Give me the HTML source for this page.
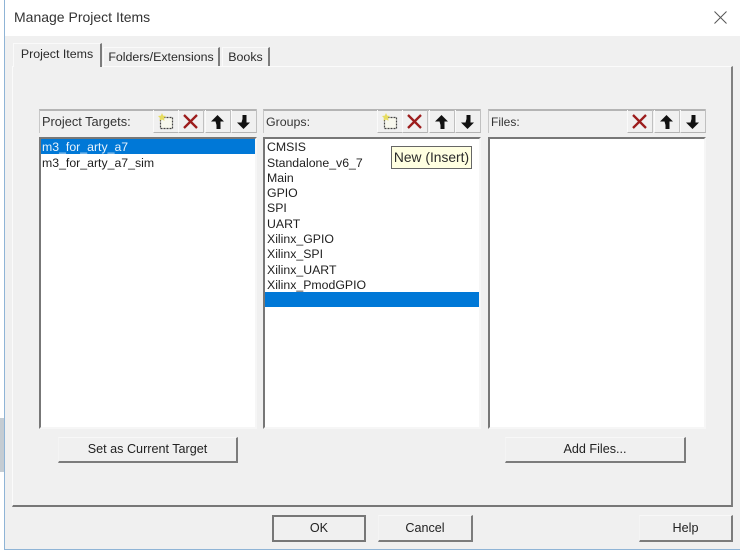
<!DOCTYPE html>
<html><head><meta charset="utf-8">
<style>
html,body{margin:0;padding:0;background:#fff}
#r{position:relative;width:740px;height:553px;overflow:hidden;background:#fff;font-family:"Liberation Sans",sans-serif;color:#222;font-size:12.3px;filter:blur(.35px)}
.a{position:absolute;box-sizing:border-box}
.t{position:absolute;white-space:nowrap;line-height:16px;color:#1e1e1e}
.h{font-size:12.8px;color:#333}
.hdr{position:absolute;box-sizing:border-box;height:24px;top:109px;width:218px;background:#f0f0f0;border-top:2px solid #b4b4b4;border-left:1px solid #c8c8c8;border-right:1px solid #e4e4e4}
.list{position:absolute;box-sizing:border-box;top:137px;height:292px;width:218px;background:#fff;border-top:2px solid #777;border-left:2px solid #777;border-right:2px solid #f6f6f6;border-bottom:2px solid #f6f6f6}
.sel{position:absolute;background:#0078d7}
.btn{position:absolute;box-sizing:border-box;height:26px;background:#f0f0f0;border-top:1px solid #f8f8f8;border-left:1px solid #f4f4f4;border-right:2px solid #7c7c7c;border-bottom:2px solid #7c7c7c;text-align:center;line-height:22px;color:#222;font-size:12.6px}
.tab{position:absolute;box-sizing:border-box;background:#f0f0f0;border-top:1px solid #fafafa;border-left:1px solid #fafafa;border-right:2px solid #7c7c7c;text-align:center;color:#2a2a2a;font-size:12.4px}
svg{position:absolute;overflow:visible}
.tb{position:absolute;box-sizing:border-box;top:110px;width:26px;height:23px;border-bottom:1px solid #b4b4b4;border-right:1px solid #c0c0c0;border-left:1px solid #fafafa}
</style></head><body>
<div id="r">
<!-- window -->
<div class="a" style="left:0;top:0;width:4px;height:553px;background:#fff"></div>
<div class="a" style="left:0;top:418px;width:4px;height:54px;background:#c4ccd3"></div>
<div class="a" style="left:4px;top:0;width:736px;height:550px;background:#f0f0f0;border-left:1px solid #8fb4d6;border-bottom:1px solid #8fb4d6"></div>
<div class="a" style="left:5px;top:0;width:735px;height:36px;background:#fff"></div>
<div class="a" style="left:0;top:550px;width:740px;height:3px;background:#fff"></div>
<div class="t" style="left:14px;top:9px;font-size:14px;color:#333">Manage Project Items</div>
<svg style="left:714px;top:11px" width="13" height="13" viewBox="0 0 13 13"><path d="M.5.5l12 12M12.500.5l-12 12" stroke="#555" stroke-width="1" fill="none"/></svg>

<!-- tab panel -->
<div class="a" style="left:12px;top:66px;width:721px;height:441px;background:#f0f0f0;border-top:1px solid #fbfbfb;border-left:1px solid #fbfbfb;border-right:2px solid #808080;border-bottom:2px solid #777"></div>
<div class="tab" style="left:13px;top:43px;width:89px;height:24px;line-height:21px;z-index:2">Project Items</div>
<div class="tab" style="left:103px;top:47px;width:117px;height:19px;line-height:18px">Folders/Extensions</div>
<div class="tab" style="left:222px;top:47px;width:48px;height:19px;line-height:18px">Books</div>

<!-- headers -->
<div class="hdr" style="left:39px"></div>
<div class="hdr" style="left:263px"></div>
<div class="hdr" style="left:488px"></div>
<div class="t h" style="left:42px;top:114px">Project Targets:</div>
<div class="t h" style="left:266px;top:114px;font-size:12.4px">Groups:</div>
<div class="t h" style="left:491px;top:114px;font-size:12px">Files:</div>

<!-- toolbar buttons -->
<div class="tb" style="left:153px"></div><div class="tb" style="left:178px"></div><div class="tb" style="left:205px"></div><div class="tb" style="left:231px"></div>
<div class="tb" style="left:377px"></div><div class="tb" style="left:402px"></div><div class="tb" style="left:429px"></div><div class="tb" style="left:455px"></div>
<div class="tb" style="left:627px"></div><div class="tb" style="left:654px"></div><div class="tb" style="left:680px"></div>

<svg style="left:157px;top:113px" width="17" height="17" viewBox="0 0 17 17"><rect x="3.500" y="4.500" width="12" height="11" fill="#f8f8ee" stroke="#444" stroke-width="1.200" stroke-dasharray="2 1"/><path d="M5 0l1.200 2.600 2.800.4-2 2 .5 2.800L5 6.500 2.500 7.800 3 5 1 3l2.800-.4z" fill="#e6dc60"/></svg>
<svg style="left:381px;top:113px" width="17" height="17" viewBox="0 0 17 17"><rect x="3.500" y="4.500" width="12" height="11" fill="#f8f8ee" stroke="#444" stroke-width="1.200" stroke-dasharray="2 1"/><path d="M5 0l1.200 2.600 2.800.4-2 2 .5 2.800L5 6.500 2.500 7.800 3 5 1 3l2.800-.4z" fill="#e6dc60"/></svg>

<svg style="left:182px;top:113px" width="17" height="17" viewBox="0 0 17 17"><path d="M2 2l13 13M15 2L2 15" stroke="#9c1c1c" stroke-width="2.300" fill="none"/></svg>
<svg style="left:406px;top:113px" width="17" height="17" viewBox="0 0 17 17"><path d="M2 2l13 13M15 2L2 15" stroke="#9c1c1c" stroke-width="2.300" fill="none"/></svg>
<svg style="left:631px;top:113px" width="17" height="17" viewBox="0 0 17 17"><path d="M2 2l13 13M15 2L2 15" stroke="#9c1c1c" stroke-width="2.300" fill="none"/></svg>

<svg style="left:211px;top:115px" width="13" height="14" viewBox="0 0 13 14"><path d="M6.500 0L13 6.500H9.500V14H5.500V10L4.500 6.500H0z" fill="#111"/></svg>
<svg style="left:237px;top:115px" width="13" height="14" viewBox="0 0 13 14"><path d="M6.500 14L13 7.500H9.500V0H5.500V4L4.500 7.500H0z" fill="#111"/></svg>
<svg style="left:435px;top:115px" width="13" height="14" viewBox="0 0 13 14"><path d="M6.500 0L13 6.500H9.500V14H5.500V10L4.500 6.500H0z" fill="#111"/></svg>
<svg style="left:461px;top:115px" width="13" height="14" viewBox="0 0 13 14"><path d="M6.500 14L13 7.500H9.500V0H5.500V4L4.500 7.500H0z" fill="#111"/></svg>
<svg style="left:660px;top:115px" width="13" height="14" viewBox="0 0 13 14"><path d="M6.500 0L13 6.500H9.500V14H5.500V10L4.500 6.500H0z" fill="#111"/></svg>
<svg style="left:686px;top:115px" width="13" height="14" viewBox="0 0 13 14"><path d="M6.500 14L13 7.500H9.500V0H5.500V4L4.500 7.500H0z" fill="#111"/></svg>

<!-- lists -->
<div class="list" style="left:39px"></div>
<div class="list" style="left:263px"></div>
<div class="list" style="left:488px"></div>

<div class="sel" style="left:41px;top:139px;width:214px;height:15px"></div>
<div class="t" style="left:42px;top:139px;color:#e8f2fb">m3_for_arty_a7</div>
<div class="t" style="left:42px;top:155px">m3_for_arty_a7_sim</div>

<div class="t" style="left:267px;top:139px">CMSIS</div>
<div class="t" style="left:267px;top:155px">Standalone_v6_7</div>
<div class="t" style="left:267px;top:170px">Main</div>
<div class="t" style="left:267px;top:185px">GPIO</div>
<div class="t" style="left:267px;top:200px">SPI</div>
<div class="t" style="left:267px;top:216px">UART</div>
<div class="t" style="left:267px;top:231px">Xilinx_GPIO</div>
<div class="t" style="left:267px;top:246px">Xilinx_SPI</div>
<div class="t" style="left:267px;top:262px">Xilinx_UART</div>
<div class="t" style="left:267px;top:277px">Xilinx_PmodGPIO</div>
<div class="sel" style="left:265px;top:292px;width:214px;height:15px"></div>

<!-- tooltip -->
<div class="a" style="left:391px;top:146px;width:81px;height:23px;background:#ffffe1;border:1px solid #666;text-align:center;line-height:21px;color:#2a2a2a;font-size:13.8px;white-space:nowrap">New (Insert)</div>

<!-- buttons -->
<div class="btn" style="left:58px;top:437px;width:180px">Set as Current Target</div>
<div class="btn" style="left:505px;top:437px;width:181px">Add Files...</div>
<div class="btn" style="left:272px;top:515px;width:94px;border:2px solid #777;line-height:23px;height:27px">OK</div>
<div class="btn" style="left:378px;top:515px;width:95px;height:27px;line-height:25px">Cancel</div>
<div class="btn" style="left:639px;top:515px;width:94px;height:27px;line-height:25px">Help</div>
</div>
</body></html>
